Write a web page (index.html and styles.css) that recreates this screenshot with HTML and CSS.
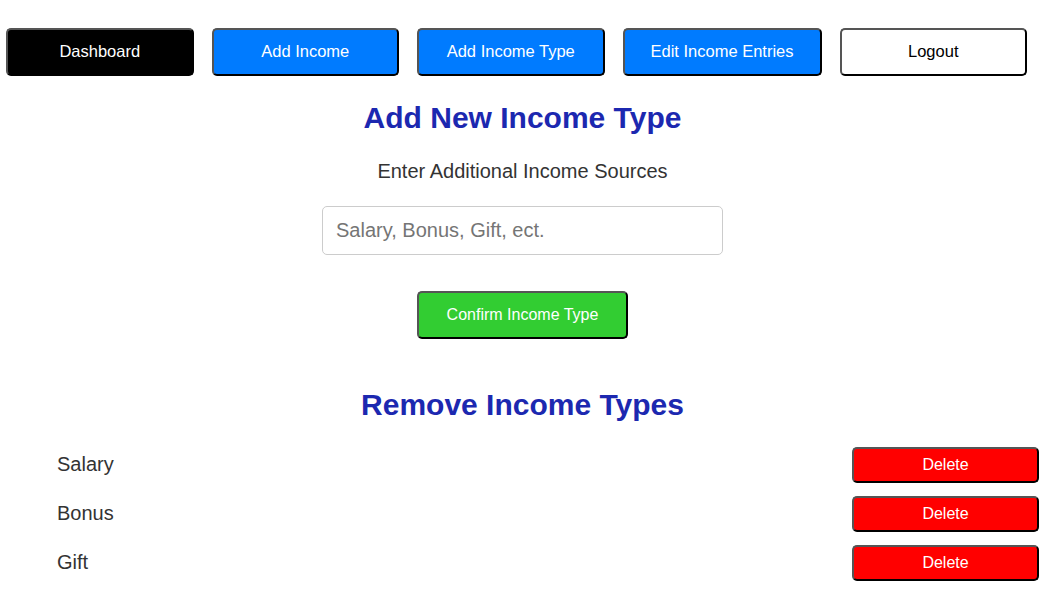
FILE: index.html
```html
<!DOCTYPE html>
<html>
<head>
<meta charset="utf-8">
<link rel="stylesheet" href="styles.css">
</head>
<body>
<div class="page">
  <nav class="nav">
    <button class="btn nav-btn dark">Dashboard</button>
    <button class="btn nav-btn blue">Add Income</button>
    <button class="btn nav-btn blue">Add Income Type</button>
    <button class="btn nav-btn blue wide">Edit Income Entries</button>
    <button class="btn nav-btn white">Logout</button>
  </nav>
  <section class="add">
    <h1 class="title">Add New Income Type</h1>
    <p class="sub">Enter Additional Income Sources</p>
    <input class="field" type="text" placeholder="Salary, Bonus, Gift, ect.">
    <button class="btn confirm">Confirm Income Type</button>
  </section>
  <section class="remove">
    <h2 class="title">Remove Income Types</h2>
    <ul class="list">
      <li class="row"><span class="name">Salary</span><button class="btn del">Delete</button></li>
      <li class="row"><span class="name">Bonus</span><button class="btn del">Delete</button></li>
      <li class="row"><span class="name">Gift</span><button class="btn del">Delete</button></li>
    </ul>
  </section>
</div>
</body>
</html>
```
FILE: styles.css
```css
* { box-sizing: border-box; }
html, body { margin: 0; padding: 0; background: #fff; }
body { font-family: "Liberation Sans", Arial, sans-serif; color: #333; }
.page { width: 1045px; padding: 28px 6px 0 6px; }
.btn {
  font-family: "Liberation Sans", Arial, sans-serif;
  font-size: 16px;
  border-width: 2px;
  border-style: solid;
  border-color: #555 #000 #000 #555;
  border-radius: 5px;
  cursor: pointer;
}
.nav { display: flex; gap: 18px; }
.nav-btn { width: 187.5px; height: 48px; font-size: 16.5px; padding-bottom: 2px; }
.nav-btn.wide { width: 199px; }
.dark { background: #000; color: #fff; }
.blue { background: #007bff; color: #fff; }
.white { background: #fff; color: #000; }
.add { display: flex; flex-direction: column; align-items: center; }
.title { margin: 0; color: #1c28b0; font-size: 30px; font-weight: bold; text-align: center; }
.add .title { margin-top: 25px; line-height: 34px; }
.sub { margin: 24px 0 0; font-size: 20px; line-height: 24px; }
.field {
  margin-top: 23px;
  width: 401px; height: 49px;
  border: 1px solid #ccc; border-radius: 5px;
  padding: 0 13px;
  font-family: "Liberation Sans", Arial, sans-serif;
  font-size: 20px; color: #333;
}
.field::placeholder { color: #757575; }
.confirm {
  margin-top: 36px;
  width: 211px; height: 48px;
  background: #32cd32; color: #fff;
}
.remove .title { margin-top: 49px; line-height: 34px; }
.list { list-style: none; margin: 18px 0 0; padding: 0; }
.row { display: flex; align-items: center; justify-content: space-between; height: 49px; padding-left: 51px; }
.name { font-size: 20px; color: #333; }
.del { width: 187px; height: 36px; background: #f00; color: #fff; }
```
